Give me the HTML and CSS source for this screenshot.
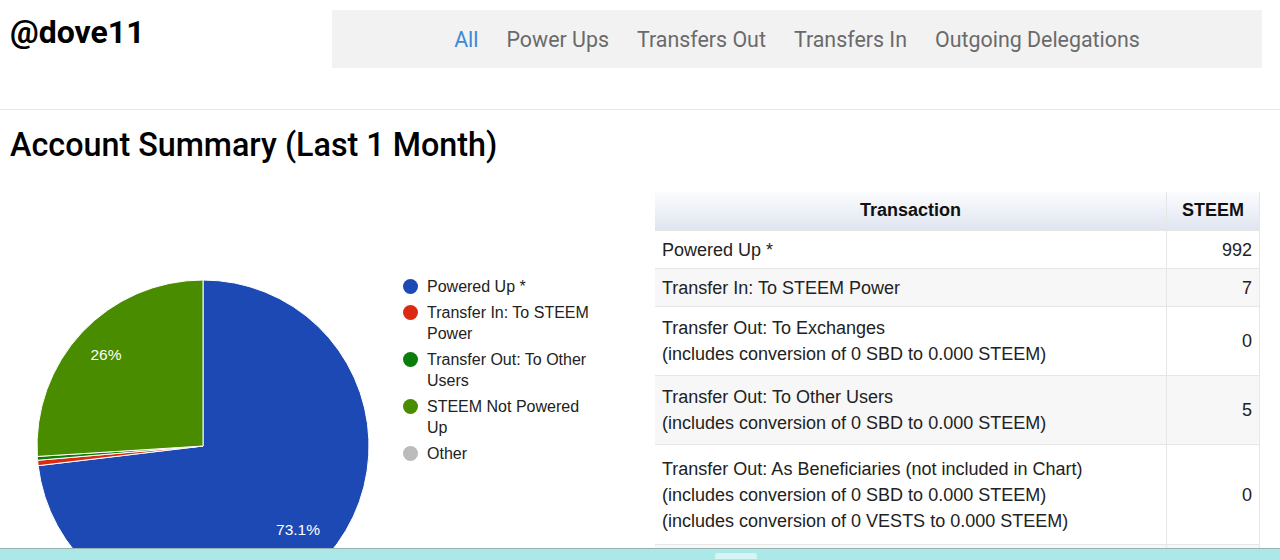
FILE: index.html
```html
<!DOCTYPE html>
<html lang="en">
<head>
  <meta charset="UTF-8" />
  <meta name="viewport" content="width=device-width, initial-scale=1.0"/>
  <title>@dove11 - Account Summary</title>
  <link rel="stylesheet" href="styles.css">
</head>
<body>
  <header class="top">
    <h1 class="account">@dove11</h1>
    <nav class="filters">
      <a href="#" class="active">All</a>
      <a href="#">Power Ups</a>
      <a href="#">Transfers Out</a>
      <a href="#">Transfers In</a>
      <a href="#">Outgoing Delegations</a>
    </nav>
  </header>

  <main class="summary">
    <h2>Account Summary (Last 1 Month)</h2>

    <div class="summary-body">
      <!-- Pie chart -->
      <div class="chart">
        <svg class="pie" width="390" height="400" viewBox="0 0 390 400">
          <g transform="translate(0,-185)" stroke="#fff" stroke-width="1">
            <path fill="#1c49b4" d="M203,446 L203,280 A166,166 0 1,1 38.17,465.66 Z"/>
            <path fill="#dc2a12" d="M203,446 L38.17,465.66 A166,166 0 0,1 37.62,460.29 Z"/>
            <path fill="#0b7d0b" d="M203,446 L37.62,460.29 A166,166 0 0,1 37.33,456.45 Z"/>
            <path fill="#4a8c00" d="M203,446 L37.33,456.45 A166,166 0 0,1 203,280 Z"/>
          </g>
          <g fill="#fff" font-family="Liberation Sans, Arial, sans-serif" font-size="15.5" text-anchor="middle">
            <text x="106" y="175">26%</text>
            <text x="298" y="350">73.1%</text>
          </g>
        </svg>

        <ul class="legend">
          <li><span class="dot blue"></span>Powered Up *</li>
          <li><span class="dot red"></span>Transfer In: To STEEM Power</li>
          <li><span class="dot green"></span>Transfer Out: To Other Users</li>
          <li><span class="dot lime"></span>STEEM Not Powered Up</li>
          <li><span class="dot grey"></span>Other</li>
        </ul>
      </div>

      <!-- Summary table -->
      <table class="tx-table">
        <thead>
          <tr>
            <th>Transaction</th>
            <th class="amount">STEEM</th>
          </tr>
        </thead>
        <tbody>
          <tr>
            <td>Powered Up *</td>
            <td class="amount">992</td>
          </tr>
          <tr>
            <td>Transfer In: To STEEM Power</td>
            <td class="amount">7</td>
          </tr>
          <tr class="two-lines">
            <td>Transfer Out: To Exchanges<br>(includes conversion of 0 SBD to 0.000 STEEM)</td>
            <td class="amount">0</td>
          </tr>
          <tr class="two-lines">
            <td>Transfer Out: To Other Users<br>(includes conversion of 0 SBD to 0.000 STEEM)</td>
            <td class="amount">5</td>
          </tr>
          <tr class="three-lines">
            <td>Transfer Out: As Beneficiaries (not included in Chart)<br>(includes conversion of 0 SBD to 0.000 STEEM)<br>(includes conversion of 0 VESTS to 0.000 STEEM)</td>
            <td class="amount">0</td>
          </tr>
          <tr class="spacer">
            <td></td>
            <td class="amount"></td>
          </tr>
        </tbody>
      </table>
    </div>
  </main>

  <div class="taskbar">
    <span class="tab"></span>
  </div>
</body>
</html>
```

FILE: styles.css
```css
/* Reset */
* {
  margin: 0;
  padding: 0;
  box-sizing: border-box;
}

body {
  font-family: 'Liberation Sans', Arial, sans-serif;
  color: #222;
  background-color: #fff;
  overflow: hidden;
}

/* Header */
.top {
  display: flex;
  align-items: flex-start;
  padding: 10px 18px 41px 10px;
  border-bottom: 1px solid #e6e6e6;
}

.account {
  font-family: Roboto, sans-serif;
  font-weight: 700;
  font-size: 32px;
  line-height: 38px;
  margin-top: 3px;
  color: #000;
}

.filters {
  margin-left: auto;
  width: 930px;
  height: 58px;
  background-color: #f2f2f2;
  display: flex;
  justify-content: center;
  align-items: center;
}

.filters a {
  font-family: Roboto, sans-serif;
  font-size: 21.4px;
  color: #6a6a6a;
  text-decoration: none;
  padding: 1px 14px 0;
}

.filters a.active {
  color: #3d8ad6;
}

/* Summary */
.summary h2 {
  font-family: Roboto, sans-serif;
  font-weight: 500;
  font-size: 32.3px;
  line-height: 38px;
  color: #000;
  padding: 16px 0 0 10px;
  height: 75px;
}

.summary-body {
  display: flex;
  align-items: flex-start;
}

.chart {
  width: 655px;
  display: flex;
  align-items: flex-start;
}

.pie {
  display: block;
  flex-shrink: 0;
}

.legend {
  list-style: none;
  width: 200px;
  margin-top: 91px;
  margin-left: 13px;
  font-size: 16px;
  line-height: 21px;
  color: #222;
}

.legend li {
  position: relative;
  padding-left: 24px;
  margin-bottom: 5px;
}

.dot {
  position: absolute;
  left: 0;
  top: 3px;
  width: 15px;
  height: 15px;
  border-radius: 50%;
}

.dot.blue { background-color: #1c49b4; }
.dot.red { background-color: #dc2a12; }
.dot.green { background-color: #0b7d0b; }
.dot.lime { background-color: #4a8c00; }
.dot.grey { background-color: #bbbbbb; }

/* Table */
.tx-table {
  width: 605px;
  margin-top: 7px;
  border-collapse: collapse;
  font-size: 18px;
  color: #222;
  border-right: 1px solid #e6e6e6;
}

.tx-table th {
  height: 38px;
  font-weight: 700;
  text-align: center;
  color: #111;
  background: linear-gradient(to bottom, #fbfcfe, #dfe5f0);
  border-right: 1px solid #e6e6e6;
}

.tx-table td {
  padding: 6px 7px 5px;
  line-height: 26px;
  border-top: 1px solid #e6e6e6;
  border-right: 1px solid #e6e6e6;
  vertical-align: middle;
}

.tx-table tbody tr:nth-child(even) {
  background-color: #f7f7f7;
}

.tx-table .two-lines td {
  padding-top: 8px;
  padding-bottom: 8px;
}

.tx-table .three-lines td {
  padding-top: 11px;
  padding-bottom: 10px;
}

.tx-table .spacer td {
  height: 38px;
}

.tx-table .amount {
  width: 93px;
  text-align: right;
}

.tx-table th.amount {
  text-align: center;
}

/* Bottom bar */
.taskbar {
  position: fixed;
  left: 0;
  right: 0;
  bottom: 0;
  height: 11px;
  background-color: #ade8e8;
  border-top: 1px solid #97b4b4;
}

.taskbar .tab {
  position: absolute;
  left: 715px;
  top: 4px;
  width: 42px;
  height: 8px;
  border-radius: 3px 3px 0 0;
  background-color: #d5f4f4;
}
```
